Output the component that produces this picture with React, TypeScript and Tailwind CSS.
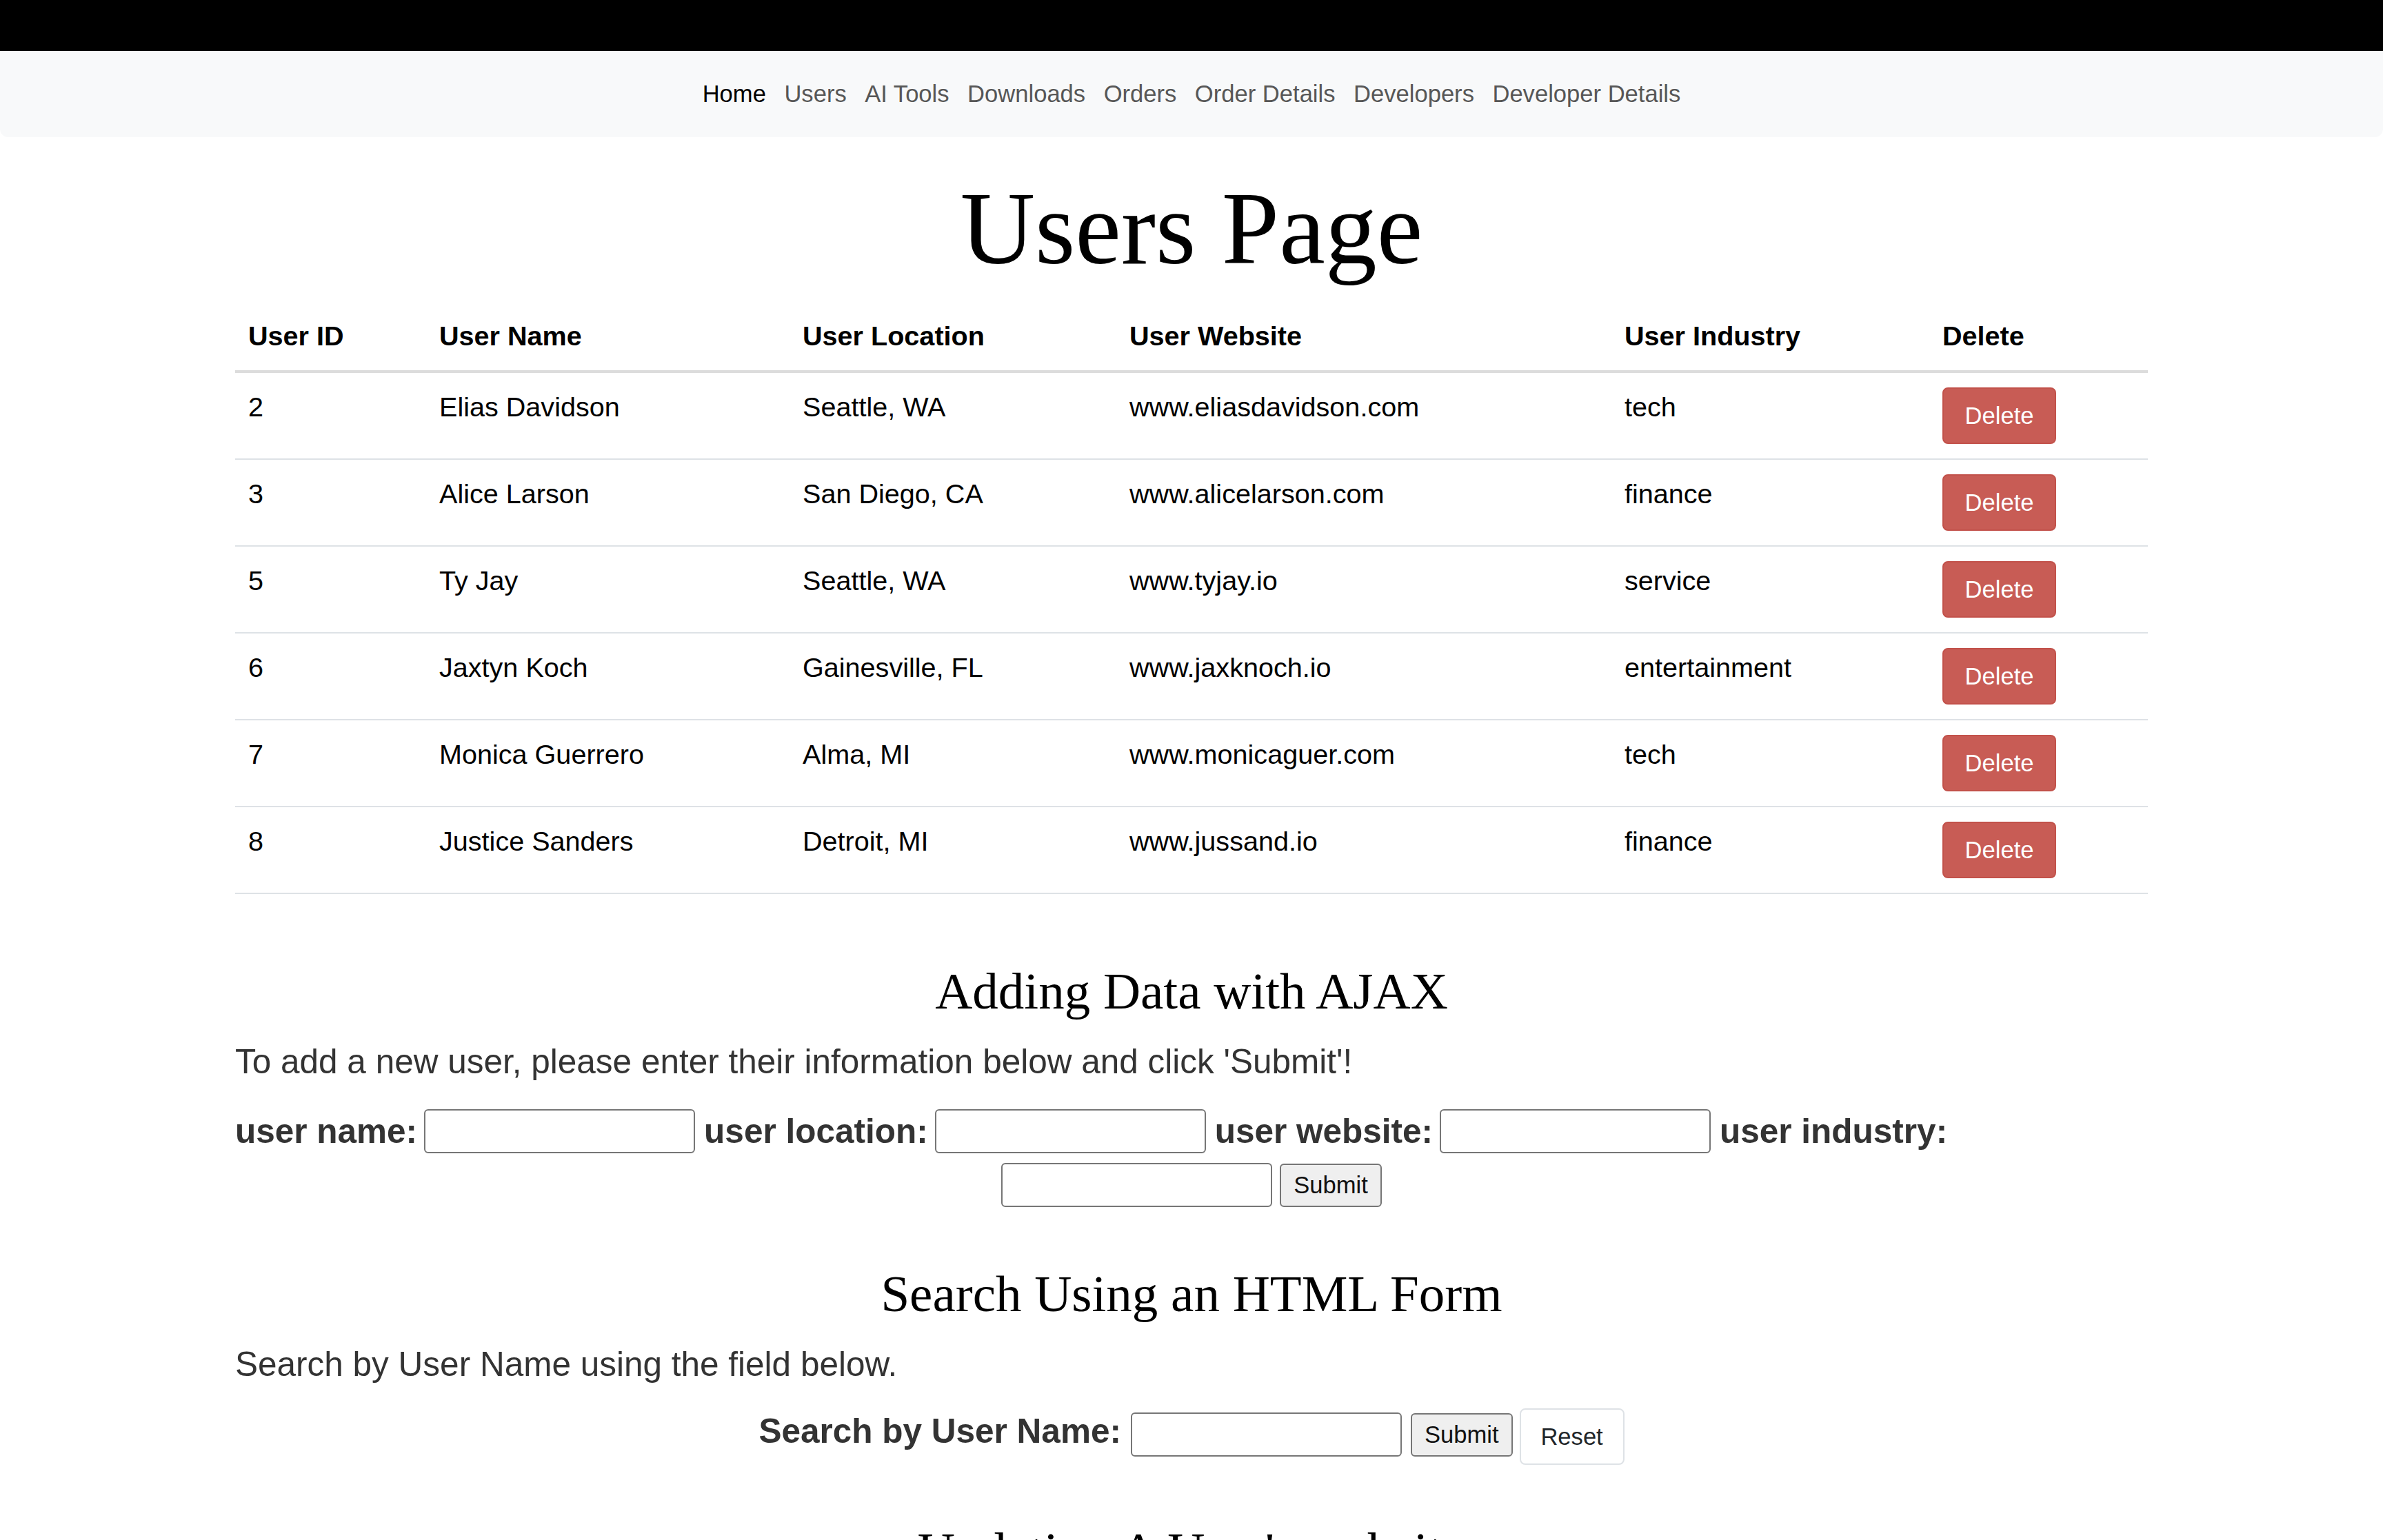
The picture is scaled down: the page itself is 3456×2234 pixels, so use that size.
import React from "react";

const users = [
  { id: 2, name: "Elias Davidson", loc: "Seattle, WA", web: "www.eliasdavidson.com", ind: "tech" },
  { id: 3, name: "Alice Larson", loc: "San Diego, CA", web: "www.alicelarson.com", ind: "finance" },
  { id: 5, name: "Ty Jay", loc: "Seattle, WA", web: "www.tyjay.io", ind: "service" },
  { id: 6, name: "Jaxtyn Koch", loc: "Gainesville, FL", web: "www.jaxknoch.io", ind: "entertainment" },
  { id: 7, name: "Monica Guerrero", loc: "Alma, MI", web: "www.monicaguer.com", ind: "tech" },
  { id: 8, name: "Justice Sanders", loc: "Detroit, MI", web: "www.jussand.io", ind: "finance" },
];

const navLinks = ["Users", "AI Tools", "Downloads", "Orders", "Order Details", "Developers", "Developer Details"];

function TextInput() {
  return (
    <input
      type="text"
      className="w-[393px] h-[64px] border-2 border-[#767676] rounded-[6px] bg-white shrink-0"
    />
  );
}

function GrayButton({ label }: { label: string }) {
  return (
    <button className="h-[63px] px-[18px] border-2 border-[#767676] rounded-[6px] bg-[#efefef] text-[34.6px] leading-none text-[#111] shrink-0">
      {label}
    </button>
  );
}

function Label({ text }: { text: string }) {
  return <span className="font-bold text-[49.5px] leading-[74px] text-[#333] whitespace-nowrap">{text}</span>;
}

export default function App() {
  return (
    <div className="min-h-screen bg-white font-['Liberation_Sans',Arial,sans-serif] text-black">
      <div className="h-[74px] bg-black" />
      <nav className="h-[125px] bg-[#f8f9fa] rounded-b-[12px] flex items-center justify-center gap-[26.5px] text-[34.6px]">
        <a className="text-black">Home</a>
        {navLinks.map((l) => (
          <a key={l} className="text-[#575757]">
            {l}
          </a>
        ))}
      </nav>

      <main className="w-[2774px] mx-auto pt-[42px]">
        <h1 className="font-['Liberation_Serif',serif] text-[150px] leading-[180px] text-center font-normal">
          Users Page
        </h1>

        <table className="mt-[16px] w-full table-fixed border-separate border-spacing-0 text-[39.6px] leading-[59.4px]">
          <thead>
            <tr className="text-left">
              <th className="w-[277px] px-[19px] pt-[21px] pb-[20px] border-b-4 border-[#dcdcdc] font-bold align-bottom">User ID</th>
              <th className="w-[527px] px-[19px] pt-[21px] pb-[20px] border-b-4 border-[#dcdcdc] font-bold align-bottom">User Name</th>
              <th className="w-[474px] px-[19px] pt-[21px] pb-[20px] border-b-4 border-[#dcdcdc] font-bold align-bottom">User Location</th>
              <th className="w-[718px] px-[19px] pt-[21px] pb-[20px] border-b-4 border-[#dcdcdc] font-bold align-bottom">User Website</th>
              <th className="w-[461px] px-[19px] pt-[21px] pb-[20px] border-b-4 border-[#dcdcdc] font-bold align-bottom">User Industry</th>
              <th className="w-[317px] px-[19px] pt-[21px] pb-[20px] border-b-4 border-[#dcdcdc] font-bold align-bottom">Delete</th>
            </tr>
          </thead>
          <tbody>
            {users.map((u) => (
              <tr key={u.id}>
                <td className="px-[19px] pt-[20px] pb-[22px] border-b-2 border-[#dee2e6] align-top">{u.id}</td>
                <td className="px-[19px] pt-[20px] pb-[22px] border-b-2 border-[#dee2e6] align-top">{u.name}</td>
                <td className="px-[19px] pt-[20px] pb-[22px] border-b-2 border-[#dee2e6] align-top">{u.loc}</td>
                <td className="px-[19px] pt-[20px] pb-[22px] border-b-2 border-[#dee2e6] align-top">{u.web}</td>
                <td className="px-[19px] pt-[20px] pb-[22px] border-b-2 border-[#dee2e6] align-top">{u.ind}</td>
                <td className="px-[19px] pt-[21px] pb-[21px] border-b-2 border-[#dee2e6] align-top">
                  <button className="w-[165px] h-[82px] flex items-center justify-center rounded-[8px] bg-[#c85c55] border-2 border-[#c2514a] text-white text-[34.6px] leading-none">
                    Delete
                  </button>
                </td>
              </tr>
            ))}
          </tbody>
        </table>

        <h2 className="mt-[96px] font-['Liberation_Serif',serif] text-[75px] leading-[89px] text-center font-normal">
          Adding Data with AJAX
        </h2>
        <p className="mt-[21px] text-[49.5px] leading-[74px] text-[#333]">
          To add a new user, please enter their information below and click 'Submit'!
        </p>
        <div className="mt-[27px] flex flex-col gap-[9px]">
          <div className="flex items-center">
            <Label text="user name:" />
            <span className="ml-[10px] flex"><TextInput /></span>
            <span className="ml-[13px]"><Label text="user location:" /></span>
            <span className="ml-[10px] flex"><TextInput /></span>
            <span className="ml-[13px]"><Label text="user website:" /></span>
            <span className="ml-[10px] flex"><TextInput /></span>
            <span className="ml-[13px]"><Label text="user industry:" /></span>
          </div>
          <div className="flex items-center justify-center gap-[11px]">
            <TextInput />
            <GrayButton label="Submit" />
          </div>
        </div>

        <h2 className="mt-[81px] font-['Liberation_Serif',serif] text-[75px] leading-[89px] text-center font-normal">
          Search Using an HTML Form
        </h2>
        <p className="mt-[21px] text-[49.5px] leading-[74px] text-[#333]">Search by User Name using the field below.</p>
        <div className="mt-[21px] flex items-center justify-center">
          <span className="-mt-[10px]"><Label text="Search by User Name:" /></span>
          <span className="ml-[14px] flex"><TextInput /></span>
          <span className="ml-[13px] flex"><GrayButton label="Submit" /></span>
          <button className="ml-[10px] mt-[6px] h-[82px] w-[152px] rounded-[8px] border-2 border-[#dee2e6] bg-white text-[34.6px] text-[#212529] leading-none">
            Reset
          </button>
        </div>

        <h2 className="mt-[80px] font-['Liberation_Serif',serif] text-[75px] leading-[89px] text-center font-normal">
          Updating A User's website
        </h2>
        <div className="h-[200px]" />
      </main>
    </div>
  );
}
